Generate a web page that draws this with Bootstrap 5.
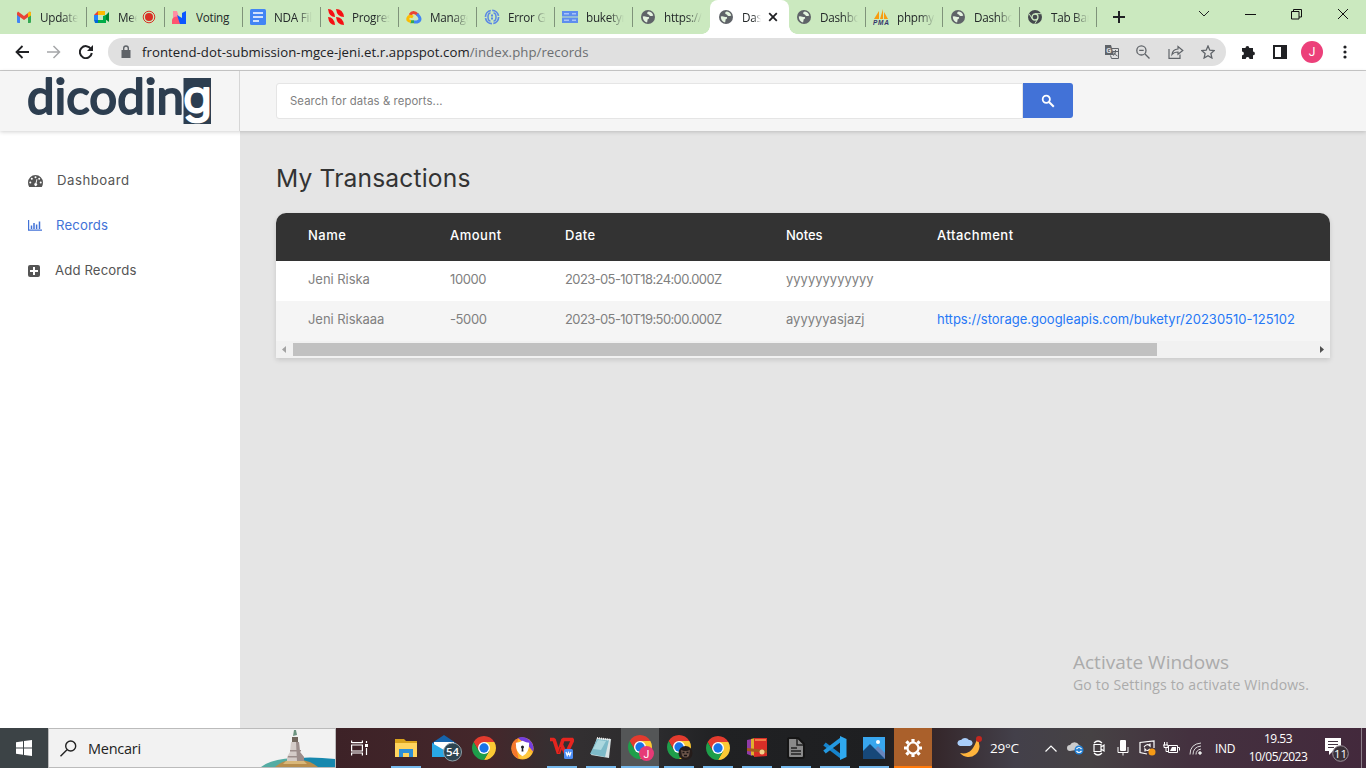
<!DOCTYPE html>
<html lang="id">
<head>
<meta charset="utf-8">
<meta name="viewport" content="width=device-width, initial-scale=1">
<title>Dashboard</title>
<link href="https://cdn.jsdelivr.net/npm/bootstrap@5.3.0/dist/css/bootstrap.min.css" rel="stylesheet">
<style>
body{height:768px;overflow:hidden;font-family:Inter,"Liberation Sans",sans-serif;font-size:13px;background:#e5e5e5}
svg{display:block;flex:none}
/* browser chrome */
.tabstrip{height:34px;background:#cbe9bf;padding-left:8px;font:11.7px "Open Sans",sans-serif;color:#24292a}
.btab{width:78px;height:34px;padding-left:8px;position:relative}
.btab.n77{width:77px}
.btab::after{content:"";width:1px;height:20px;background:#7f937a;position:absolute;right:-1px;top:7px}
.btab.nosep::after{display:none}
.btab .cap{margin-left:8px;width:38px;overflow:hidden;white-space:nowrap;letter-spacing:-.25px;-webkit-mask-image:linear-gradient(90deg,#000 60%,transparent)}
.btab .cap.full{-webkit-mask-image:none}
.btab.live{width:79px;background:#fff;border-radius:8px 8px 0 0}
.btab.live::before{content:"";position:absolute;left:-8px;right:-8px;bottom:0;height:8px;background:radial-gradient(circle at 0 0,transparent 7.5px,#fff 8px) left/8px 8px no-repeat,radial-gradient(circle at 100% 0,transparent 7.5px,#fff 8px) right/8px 8px no-repeat}
.toolbar{height:37px;background:#fff;border-bottom:1px solid #cbcbcb}
.omni{width:1118px;height:28px;border-radius:14px;background:#e0e0e0;font:13.2px "Open Sans",sans-serif;color:#202124;padding-left:12px;letter-spacing:.05px}
.avatar{width:22px;height:22px;background:#ec407a;color:#fff;font:12px Roboto,sans-serif}
/* app */
.app{height:657px}
.app-top{height:60px;background:#f5f5f5;box-shadow:0 1px 4px rgba(0,0,0,.18);position:relative;z-index:2}
.brand{width:240px;height:60px;border-right:1px solid #d6d6d6}
.find{width:797px;height:36px;margin-left:36px}
.find .form-control{border:1px solid #e5e5e5;border-radius:3px 0 0 3px;font-size:11.3px;padding:0 13px;letter-spacing:.1px;height:36px}
.find .form-control::placeholder{color:#808080;opacity:1}
.find .btn{width:50px;height:35px;border-radius:0 3px 3px 0;background:#4272d7;padding:0}
.side{width:240px;background:#fff;padding:27px 28px}
.side .nav-link{height:45px;padding:0;color:#555;font-size:13.2px;font-weight:400;letter-spacing:.12px}
.side .nav-link.active{color:#4272d7}
.main{padding:29px 36px}
.main h1{font-size:24.6px;font-weight:400;line-height:36px;color:#333;letter-spacing:.15px;margin-bottom:17px}
.sheet{width:1054px;height:145px;border-radius:10px 10px 0 0;overflow:hidden;background:#fff}
.sheet-wrap{box-shadow:0 2px 5px rgba(0,0,0,.13);border-radius:10px 10px 0 0}
.sheet table{table-layout:fixed;margin:0;border-collapse:collapse;width:1054px;white-space:nowrap}
.sheet th{height:48px;background:#333;color:#fff;font-weight:500;padding:0 0 3px;letter-spacing:.5px}
.sheet td{height:40px;color:#808080;padding:0 0 3px}
.sheet td:first-child{letter-spacing:-.05px}
.sheet td:nth-child(2){letter-spacing:-.4px}
.sheet td:nth-child(3){letter-spacing:-.61px}
.sheet th:nth-child(4){letter-spacing:0}
.sheet th:first-child,.sheet td:first-child{padding-left:32px}
.sheet tr:nth-child(2) td{background:#f5f5f5}
.sheet a{color:#2678f5;text-decoration:none}
.track{height:17px;background:#f1f1f1}
.thumb{width:864px;height:13px;background:#c1c1c1}
.watermark{position:absolute;left:1073px;top:650px;color:#ababab;font-family:"Open Sans",sans-serif;z-index:5}
/* taskbar */
.taskbar{height:40px;color:#fff;font:12px "Open Sans",sans-serif;background:linear-gradient(90deg,#3c4346 0,#3c4346 48px,#3d2227 336px,#44272b 490px,#343032 560px,#2b2b2d 660px,#202123 720px,#1e1f21 880px,#35272b 936px,#43404a 1015px,#464244 1090px,#44313f 1190px,#43293c 1366px)}
.taskbar>div{flex-shrink:0}
.tsearch{width:288px;height:40px;background:#f2f2f2;border:1px solid #bbb;color:#222;font-size:14.5px;position:relative;overflow:hidden}
.task{width:39px;height:40px;position:relative}
.task.open::after{content:"";position:absolute;left:5px;right:4px;bottom:0;height:2px;background:#76b9ed}
.task.focus{background:#545657}.task.focus::after{left:0;right:0}
.task.alert-app{background:#aa602b}.task.alert-app::after{left:0;right:0;background:#ff7a0c}
.tray{width:24px}
</style>
</head>
<body>
<svg width="0" height="0" class="position-absolute">
<symbol id="globe" viewBox="0 0 16 16"><circle cx="8" cy="8" r="8" fill="#5f6368"/><path fill="#e4f3df" d="M9 1.800q-2 .3-2 2 .3 1.400 2 1.200l1 1.500q1.500.8 4-.3Q13 2.600 9 1.800zM2 7.300q2.500-.3 4 .3 2 .8 3 .4 1 1.800-.6 2.400-1.400.3-1 2l-.5 1.800Q2.300 13 2 7.300z"/></symbol>
<symbol id="chrome" viewBox="2 2 44 44"><path fill="#e33b2e" d="M4.950 13A22 22 0 0 1 43.050 13H24L14.470 29.500Z"/><path fill="#fcc934" d="M43.050 13A22 22 0 0 1 24 46L33.530 29.500 24 13Z"/><path fill="#1e9e4a" d="M24 46A22 22 0 0 1 4.950 13L14.470 29.500H33.530Z"/><circle cx="24" cy="24" r="11" fill="#fff"/><circle cx="24" cy="24" r="8.500" fill="#1a73e8"/></symbol>
</svg>
<div class="d-flex flex-column">
<header>
<div class="tabstrip d-flex">
  <div class="btab d-flex align-items-center"><svg width="16" height="16" viewBox="0 0 16 16"><path fill="#4285f4" d="M1 4h3v10H2a1 1 0 0 1-1-1z"/><path fill="#34a853" d="M12 6h3v7a1 1 0 0 1-1 1h-2z"/><path fill="#ea4335" d="M1 4l1-1.400L8 7l6-4.400L15 4v2l-7 5-7-5z"/><path fill="#fbbc04" d="M12 4l2-1.400L15 4v2.500l-3 2z"/></svg><span class="cap">Updates</span></div>
  <div class="btab d-flex align-items-center"><svg width="16" height="16" viewBox="0 0 16 16"><path fill="#2684fc" d="M0 6h4v5H0z"/><path fill="#ea4335" d="M0 6l4-4v4z"/><path fill="#ffba00" d="M4 2h7v4H4z"/><path fill="#00832d" d="M11 7l4-4v10l-4-3z"/><path fill="#0066da" d="M0 11h4v3H1z"/><path fill="#00ac47" d="M4 11h5V7l3-1v8H4z"/></svg><span class="cap" style="width:19px">Meet</span><svg style="margin-left:5px" width="14" height="14" viewBox="0 0 14 14"><circle cx="7" cy="7" r="5.800" fill="none" stroke="#d93025"/><circle cx="7" cy="7" r="4" fill="#d93025"/></svg></div>
  <div class="btab d-flex align-items-center"><svg width="16" height="16" viewBox="0 0 16 16"><path fill="#ff8fa3" d="M1 2h4l2 6-6 4z"/><path fill="#ff5470" d="M0 12a4 4 0 0 1 7-3l2 6H0z"/><path fill="#0b57ff" d="M5 6l5 3V4l4-2v13H8z"/></svg><span class="cap full">Voting</span></div>
  <div class="btab d-flex align-items-center"><svg width="16" height="16"><rect width="16" height="16" rx="1.500" fill="#4285f4"/><path stroke="#fff" stroke-width="1.600" d="M3 4h10M3 8h10M3 12h6"/></svg><span class="cap">NDA File</span></div>
  <div class="btab d-flex align-items-center"><svg width="16" height="16" viewBox="0 0 16 16"><path fill="#f60f12" d="M0 0q6 0 7 8Q1 8 0 0zM8 0q7 0 8 8-7 0-8-8zM0 8q6 0 7 8-6 0-7-8zM8 8q7 0 8 8-7 0-8-8z"/></svg><span class="cap">Progress</span></div>
  <div class="btab d-flex align-items-center"><svg width="16" height="16" viewBox="0 0 16 16" fill="none" stroke-width="3"><path stroke="#ea4335" d="M4 6q3-5 8 0"/><path stroke="#4285f4" d="M11 5q3 3 3 5t-3 3H8"/><path stroke="#34a853" d="M8 12.700H4"/><path stroke="#fbbc04" d="M5 12.500Q1 12 2 9t5-1"/></svg><span class="cap">Manage</span></div>
  <div class="btab d-flex align-items-center"><svg width="16" height="16" viewBox="0 0 16 16" fill="none" stroke="#5b88e4"><circle cx="8" cy="8" r="6.600" stroke-width="1.700" stroke-dasharray="9 1.370"/><path stroke-width="1.500" d="M6.500 4Q4 4 4 8t2.500 4M9.500 4Q12 4 12 8t-2.500 4"/><path stroke-width="2" d="M8 5.500v2M8 8.500v2"/></svg><span class="cap">Error Gc</span></div>
  <div class="btab d-flex align-items-center"><svg width="16" height="16" viewBox="0 0 16 16"><path fill="#5d8dee" d="M0 2h16v5.500H0zM0 8.500h16V14H0z"/><path stroke="#a9c3f8" stroke-width="1.500" d="M2 4.700h5M10 4.700h4M2 11.300h5M10 11.300h4"/></svg><span class="cap">buketyr</span></div>
  <div class="btab nosep d-flex align-items-center"><svg width="16" height="14"><use href="#globe"/></svg><span class="cap">https://s</span></div>
  <div class="btab live nosep d-flex align-items-center"><svg width="16" height="14"><use href="#globe"/></svg><span class="cap" style="width:19px">Dash</span><svg style="margin-left:7px" width="10" height="10" viewBox="0 0 10 10"><path stroke="#202124" stroke-width="1.800" d="M1.200 1.200l7.600 7.600M8.800 1.200L1.200 8.800"/></svg></div>
  <div class="btab d-flex align-items-center" style="width:76px;padding-left:7px"><svg width="16" height="14"><use href="#globe"/></svg><span class="cap">Dashbo</span></div>
  <div class="btab n77 d-flex align-items-center"><svg width="16" height="16" viewBox="0 0 16 16"><path fill="#f89c0e" d="M1 10L6 2v8zM7 10L10 0v10zM11 10V3l4 7z"/><text x="0" y="16" font-size="6.500" font-weight="700" font-style="italic" fill="#33356b" font-family="Liberation Sans" textLength="16">PMA</text></svg><span class="cap">phpmya</span></div>
  <div class="btab n77 d-flex align-items-center"><svg width="16" height="14"><use href="#globe"/></svg><span class="cap">Dashbo</span></div>
  <div class="btab n77 d-flex align-items-center"><svg width="16" height="14" viewBox="0 0 16 14"><circle cx="8" cy="7" r="7" fill="#45494d"/><circle cx="8" cy="7" r="3" fill="#45494d" stroke="#cbe9bf" stroke-width="1.300"/><path stroke="#cbe9bf" d="M8 3.700h6M5.200 8.800l-3-5M10.800 8.800l-3 5"/></svg><span class="cap">Tab Bar</span></div>
  <div class="d-flex align-items-center" style="margin-left:17px"><svg width="12" height="12"><path stroke="#202124" stroke-width="2" d="M6 0v12M0 6h12"/></svg></div>
  <div class="d-flex align-items-center ms-auto" style="height:28px;gap:35px;padding-right:17px"><svg width="12" height="8"><path fill="none" stroke="#202124" d="M1 1l5 5 5-5"/></svg><svg width="11" height="11"><path stroke="#111" d="M0 5.500h11"/></svg><svg width="11" height="11"><path fill="none" stroke="#111" d="M.5 2.500h7.500v7.500H.5zM2.500 2.500v-2h8v7.500h-2.500"/></svg><svg width="12" height="12"><path stroke="#111" d="M1 1l10 10M11 1L1 11"/></svg></div>
</div>
<div class="toolbar d-flex align-items-center">
  <div class="d-flex align-items-center" style="width:108px;padding-left:15px;gap:18px"><svg width="14" height="14" viewBox="0 0 14 14"><path fill="none" stroke="#202124" stroke-width="1.800" d="M14 7H1.500M7.500 1l-6 6 6 6"/></svg><svg width="14" height="14" viewBox="0 0 14 14"><path fill="none" stroke="#a5a7a9" stroke-width="1.500" d="M0 7h12.500M6.500 1l6 6-6 6"/></svg><svg width="14" height="14" viewBox="0 0 14 14"><path fill="none" stroke="#202124" stroke-width="2" d="M12 4A6 6 0 1 0 12.800 8"/><path fill="#202124" d="M14 0v6H8z"/></svg></div>
  <div class="omni d-flex align-items-center"><svg width="12" height="14" viewBox="0 0 12 14"><path fill="#5f6368" d="M1.500 5h9v8h-9z"/><path fill="none" stroke="#5f6368" stroke-width="1.400" d="M3.700 5V3.300a2.300 2.300 0 0 1 4.600 0V5"/></svg><span style="margin-left:10px">frontend-dot-submission-mgce-jeni.et.r.appspot.com<span style="color:#6b6e71">/index.php/records</span></span>
    <div class="d-flex align-items-center ms-auto" style="gap:17.5px;padding-right:11px"><svg width="14" height="14" viewBox="0 0 14 14"><path fill="#5f6368" d="M0 0h6l3 10H0z"/><path fill="none" stroke="#5f6368" d="M7 3.500h6.500v10H6.500l-1-3M8 6.500h5M10.500 5v1.500q0 3-2.500 4M9 7.500q1 2.500 3.500 3.500"/><text x="1.200" y="7.700" font-size="7.500" font-weight="700" font-family="Roboto" fill="#e0e0e0">G</text></svg><svg width="14" height="14" viewBox="0 0 14 14"><path fill="none" stroke="#5f6368" stroke-width="1.400" d="M9 9l4.500 4.500M3.200 5.400h4.500"/><circle cx="5.400" cy="5.400" r="4.600" fill="none" stroke="#5f6368" stroke-width="1.300"/></svg><svg width="16" height="14" viewBox="0 0 16 14"><path fill="none" stroke="#5f6368" stroke-width="1.200" d="M1 4v9.300h11V9.500M4 9.500q.5-5 6-5.500V1.500L14.800 5.500 10 9.300V7Q6 7 4 9.500z"/></svg><svg width="14" height="14" viewBox="0 0 14 14"><path fill="none" stroke="#5f6368" stroke-width="1.300" d="M7 1l1.800 4.200 4.500.4-3.400 3 1 4.400L7 10.700 3.100 13l1-4.400-3.400-3 4.500-.4z"/></svg></div></div>
  <div class="d-flex align-items-center" style="margin-left:15px"><svg width="14" height="15" viewBox="0 0 14 15"><path fill="#202124" d="M1 3h3.500a1.900 1.900 0 0 1 3.800 0H12v3.500a1.900 1.900 0 0 1 0 3.800V14H8.500a1.900 1.900 0 0 0-3.800 0H1v-3.700a1.900 1.900 0 0 0 0-3.800z"/></svg><svg style="margin-left:18px" width="14" height="14"><path fill="none" stroke="#202124" stroke-width="2" d="M1 1h12v12H1z"/><path fill="#202124" d="M8 1h5v12H8z"/></svg><div class="avatar rounded-circle d-flex align-items-center justify-content-center" style="margin-left:14px">J</div><svg style="margin-left:20px" width="4" height="14" fill="#202124"><circle cx="2" cy="2" r="1.600"/><circle cx="2" cy="7" r="1.600"/><circle cx="2" cy="12" r="1.600"/></svg></div>
</div>
</header>
<div class="app d-flex flex-column">
  <div class="app-top d-flex align-items-center">
    <div class="brand"><svg width="239" height="60" viewBox="0 0 239 60"><rect x="183.500" y="7" width="27.500" height="46" fill="#2d3e50"/><g stroke-linejoin="round" stroke-linecap="round"><text font-family="Lato" font-size="48" x="27" y="42.500" textLength="157" lengthAdjust="spacingAndGlyphs" fill="#2d3e50" stroke="#2d3e50" stroke-width="1.900">dicodin</text><text font-family="Inter" font-size="45" x="183" y="42.300" textLength="29" fill="#fff" stroke="#fff" stroke-width="1.800" lengthAdjust="spacingAndGlyphs">g</text></g></svg></div>
    <form class="find d-flex"><input class="form-control shadow-none" placeholder="Search for datas &amp; reports..."><button type="button" class="btn flex-shrink-0 d-flex align-items-center justify-content-center"><svg width="14" height="14" viewBox="0 0 14 14"><circle cx="5.300" cy="5.300" r="3.600" fill="none" stroke="#fff" stroke-width="1.800"/><path stroke="#fff" stroke-width="2" d="M8 8l4.800 4.800"/></svg></button></form>
  </div>
  <div class="d-flex flex-grow-1">
    <nav class="side nav flex-column flex-nowrap">
      <a class="nav-link d-flex align-items-center" href="#"><svg width="15" height="12" viewBox="0 0 15 12"><path fill="#555" d="M7.500 0A7.500 7.500 0 0 0 0 7.500Q0 10 1.200 12h12.600Q15 10 15 7.500A7.500 7.500 0 0 0 7.500 0z"/><g fill="#fff"><circle cx="2.300" cy="7.500" r="1"/><circle cx="3.800" cy="3.800" r="1"/><circle cx="7.500" cy="2.200" r="1"/><circle cx="11.200" cy="3.800" r="1"/><circle cx="12.700" cy="7.500" r="1"/><path d="M8.600 4l.8.200-.9 4a1.500 1.500 0 1 1-1-.2z"/></g></svg><span style="margin-left:14px;letter-spacing:.5px">Dashboard</span></a>
      <a class="nav-link active d-flex align-items-center" href="#"><svg width="14" height="11" viewBox="0 0 14 11"><path fill="none" stroke="#4272d7" stroke-width="1.200" d="M.6 0v10.200H14"/><path stroke="#4272d7" stroke-width="1.500" d="M3.500 9V5.500M6 9V3M8.600 9V4.500M11.500 9V1.500"/></svg><span style="margin-left:14px">Records</span></a>
      <a class="nav-link d-flex align-items-center" href="#"><svg width="12" height="12"><rect width="12" height="12" rx="2" fill="#555"/><path stroke="#fff" stroke-width="2" d="M6 2v8M2 6h8"/></svg><span style="margin-left:15px">Add Records</span></a>
    </nav>
    <main class="main flex-grow-1">
      <h1>My Transactions</h1>
      <div class="sheet-wrap"><div class="sheet">
        <table><colgroup><col style="width:174px"><col style="width:115px"><col style="width:221px"><col style="width:151px"><col></colgroup>
          <thead><tr><th>Name</th><th>Amount</th><th>Date</th><th>Notes</th><th>Attachment</th></tr></thead>
          <tbody><tr><td>Jeni Riska</td><td>10000</td><td>2023-05-10T18:24:00.000Z</td><td>yyyyyyyyyyyy</td><td></td></tr>
          <tr><td>Jeni Riskaaa</td><td>-5000</td><td>2023-05-10T19:50:00.000Z</td><td>ayyyyyasjazj</td><td><a href="#">https://storage.googleapis.com/buketyr/20230510-125102</a></td></tr></tbody></table>
        <div class="track d-flex align-items-center"><svg width="17" height="17"><path fill="#a3a3a3" d="M10 5v7L6 8.500z"/></svg><div class="thumb"></div><svg class="ms-auto" width="17" height="17"><path fill="#505050" d="M7 5v7l4-3.500z"/></svg></div>
      </div></div>
    </main>
  </div>
</div>
<div class="watermark"><div style="font-size:19px;line-height:24px">Activate Windows</div><div style="font-size:14px;line-height:21px;letter-spacing:.19px">Go to Settings to activate Windows.</div></div>
<footer class="taskbar d-flex">
  <div class="d-flex align-items-center justify-content-center" style="width:48px"><svg width="16" height="16"><path fill="#fff" d="M0 2.300l7-1v6.200H0zM8 1.100L16 0v7.500H8zM0 8.500h7v6.200l-7-1zM8 8.500h8V16l-8-1.100z"/></svg></div>
  <div class="tsearch d-flex align-items-center"><svg style="margin-left:11px" width="17" height="17" viewBox="0 0 17 17"><circle cx="10.700" cy="6" r="5" fill="none" stroke="#222" stroke-width="1.400"/><path stroke="#222" stroke-width="1.400" d="M7 9.700L.5 16.200"/></svg><span style="margin-left:11px;letter-spacing:-.25px">Mencari</span>
    <svg class="position-absolute end-0 bottom-0" width="76" height="38" viewBox="0 0 76 38"><path fill="#1788ae" d="M28 30q22-3 48 0v8H28z"/><path fill="#53aca3" d="M2 38q10-8 32-9v9z"/><path fill="#b78d4d" d="M16 38q8-7 20-8 15 1 23 8z"/><path fill="#d9b779" d="M27 32h18l3 3H24z"/><path fill="#d4cbc8" d="M32 13h8l1 10 4 5v4H28v-4l3-5z"/><path fill="#9c8d8b" d="M37 13h3l1 10 4 5v4h-7zM31 21h11v1.500H31zM29 27h15v1.500H29z"/><path fill="#72665d" d="M33 8h6v5h-6z"/><path fill="#6d9480" d="M35 1h2l1 5-4 1z"/></svg></div>
  <div class="d-flex align-items-center justify-content-center" style="width:50px;padding-right:3px"><svg width="17" height="16" viewBox="0 0 17 16"><path fill="none" stroke="#fff" stroke-width="1.200" d="M.6 3V.6M.6 2.600h10.800M11.400 3V.6M.6 5h10.800v6H.6zM.6 15.500V13h10.800v2.500M15.500 1v2M15.500 8v7"/><path fill="#fff" d="M14 4h3v3h-3z"/></svg></div>
  <div class="task open d-flex align-items-center justify-content-center"><svg width="22" height="20"><path fill="#d9a21b" d="M0 1h9l2 2h11v5H0z"/><path fill="#ffd45e" d="M0 5h22v14H0z"/><path fill="#2d8fd7" d="M4 11h14v8h-4v-4H8v4H4z"/></svg></div>
  <div class="task d-flex align-items-center justify-content-center"><svg width="32" height="28" viewBox="0 0 32 28" style="margin-left:5px"><path fill="#1564ac" d="M1 9L13 1l12 8v13H1z"/><path fill="#fff" d="M3 8h20v9H3z"/><path fill="#29a8e6" d="M1 9l12 7 12-7v14H1z"/><circle cx="21.500" cy="18" r="9" fill="#2e4652" stroke="#8da0a8"/><text x="21.500" y="22.300" text-anchor="middle" font-size="11.500" fill="#fff" font-weight="600" font-family="Open Sans">54</text></svg></div>
  <div class="task d-flex align-items-center justify-content-center"><svg width="24" height="24"><use href="#chrome"/></svg></div>
  <div class="task d-flex align-items-center justify-content-center"><svg width="23" height="23" viewBox="0 0 24 24"><circle cx="12" cy="12" r="11.500" fill="#ffb52c"/><path fill="#743ee0" d="M7 1a12 12 0 0 1 16 14L18 9z"/><path fill="#f4772e" d="M8 1Q0 4 .5 12T8 23L5 10z"/><path fill="#ffc83e" d="M8 22q9 3 14-5l-5-3z"/><path fill="#fff" d="M12 4q4 2 7 2 0 11-7 14Q5 17 5 6q3 0 7-2z"/><circle cx="12" cy="10.500" r="1.600" fill="#25232a"/><path fill="#25232a" d="M11.400 11h1.200l.4 4h-2z"/></svg></div>
  <div class="task open d-flex align-items-center justify-content-center"><svg width="25" height="24" viewBox="0 0 25 24"><path fill="none" stroke="#e5251f" stroke-width="3.600" stroke-linejoin="bevel" d="M1 3.500h4l4.500 14L14 3.500h10L17 18l-4.500-9"/><path fill="none" stroke="#a11b17" d="M11.500 11l-2 6"/><rect x="15" y="13" width="9" height="10" rx="1.500" fill="#4d8df5"/><path fill="none" stroke="#fff" stroke-width="1.200" d="M17 16l1.200 3.500 1.300-3 1.300 3L22 16"/></svg></div>
  <div class="task open d-flex align-items-center justify-content-center"><svg width="24" height="24"><path fill="#d9e3e4" d="M8 2l14 1-2 19-18-3z"/><path fill="#7dbac8" d="M8 3l12 1-4 17-15-3z"/><path fill="#acd8df" d="M9 4l8 1-5 9-8-1z"/><path stroke="#eee" stroke-dasharray="1 1" stroke-width="2" d="M8 2l14 2"/></svg></div>
  <div class="task open focus d-flex align-items-center justify-content-center" style="width:38px;margin-left:1px"><svg width="28" height="26" style="margin-left:4px"><use href="#chrome" width="24" height="24"/><circle cx="18.500" cy="18.500" r="7.500" fill="#e63a76"/><text x="18.500" y="22.500" fill="#fff" font-size="10.500" text-anchor="middle" font-family="Roboto">J</text></svg></div>
  <div class="task open d-flex align-items-center justify-content-center"><svg width="28" height="26" style="margin-left:4px"><use href="#chrome" width="24" height="24"/><circle cx="18.500" cy="18" r="7" fill="#251c1a"/><path fill="#6c554a" d="M14 15l3 1h3l3-1-1 6q-3 3-7 0z"/><path stroke="#171313" stroke-width="1.500" d="M15.500 17.500h2M19.500 17.500h2M17 20.500h3"/></svg></div>
  <div class="task open d-flex align-items-center justify-content-center"><svg width="24" height="24"><use href="#chrome"/></svg></div>
  <div class="task open d-flex align-items-center justify-content-center"><svg width="22" height="22"><path fill="#913ba8" d="M1 3l5-1v17l-5-2z"/><path fill="#e0af2e" d="M5 2l4-1v18l-4-1z"/><path fill="#d92e27" d="M8 1h13v18l-13 1z"/><path fill="#f27a45" d="M9 2h11v2H9z"/><path fill="#a65a1d" d="M1 11l20 2v3L1 14z"/><circle cx="16" cy="15" r="2.500" fill="#f2d28b"/></svg></div>
  <div class="task open d-flex align-items-center justify-content-center"><svg width="18" height="22"><path fill="#8a8a8a" stroke="#151515" stroke-width="2" d="M2 1h9l6 6v12q0 2-2 2H3q-2 0-2-2V2z"/><path fill="none" stroke="#222" stroke-width="1.500" d="M4 11h6M4 14h10M4 17h10M10 2v6h6"/></svg></div>
  <div class="task open d-flex align-items-center justify-content-center"><svg width="24" height="24"><path fill="none" stroke="#1684cd" stroke-width="4" d="M1.500 8L18 20.500"/><path fill="none" stroke="#2499e0" stroke-width="4" d="M1.500 16L18 3.500"/><path fill="#2fa9ef" d="M17 0l6.500 3v18L17 24z"/></svg></div>
  <div class="task open d-flex align-items-center justify-content-center"><svg width="22" height="22"><path fill="#38a6ee" d="M0 0h22v22H0z"/><path fill="#6785bd" d="M9 15l6-6 7 7v6H9z"/><path fill="#174879" d="M0 14l7-7 15 15H0z"/><circle cx="15" cy="5" r="2" fill="#fff"/></svg></div>
  <div class="task open alert-app d-flex align-items-center justify-content-center" style="width:38px;margin-left:1px"><svg width="18" height="18" viewBox="0 0 18 18"><circle cx="9" cy="9" r="5.500" fill="none" stroke="#fff" stroke-width="2.200"/><path stroke="#fff" stroke-width="3.200" d="M9 0v3M9 15v3M0 9h3M15 9h3M2.400 2.400l2 2M13.600 13.600l2 2M2.400 15.600l2-2M13.600 4.400l2-2"/></svg></div>
  <div class="d-flex align-items-center" style="margin-left:25px;width:82px"><svg width="26" height="24"><path fill="#ffb43c" d="M20 3a11 11 0 1 1-17 14q12 3 17-14z"/><path fill="#a9cdf9" d="M3 10a3 3 0 0 1 1-6 5 5 0 0 1 8 0 3 3 0 0 1 1 6z"/><circle cx="22" cy="3" r="3" fill="#c4271f"/></svg><span style="margin-left:7px;font-size:13.500px;letter-spacing:-.2px">29°C</span></div>
  <div class="tray d-flex align-items-center justify-content-center"><svg width="12" height="7"><path fill="none" stroke="#fff" stroke-width="1.200" d="M.5 6.500L6 1l5.500 5.500"/></svg></div>
  <div class="tray d-flex align-items-center justify-content-center"><svg width="17" height="14"><path fill="#ccc" d="M3 10a3 3 0 0 1 0-6 5 5 0 0 1 9 0q3 1 3 4z"/><circle cx="12" cy="9" r="4.500" fill="#2380d4"/><path fill="none" stroke="#fff" stroke-width="1.200" d="M9.500 8q2.500-3 5 0M14.500 10q-2.500 3-5 0"/></svg></div>
  <div class="tray d-flex align-items-center justify-content-center"><svg width="12" height="16"><path fill="none" stroke="#fff" stroke-width="1.200" d="M1 3q4-4 8 0M1 13q4 4 8 0M1 4.500h7v7H1zM8 7l3-2v6L8 9"/></svg></div>
  <div class="tray d-flex align-items-center justify-content-center"><svg width="12" height="16"><rect x="3" width="6" height="11" rx="1" fill="#fff"/><path fill="none" stroke="#fff" d="M1 7v5.500h10V7M6 12v3.500"/></svg></div>
  <div class="tray d-flex align-items-center justify-content-center"><svg width="17" height="16"><path fill="none" stroke="#fff" stroke-width="1.200" d="M15 8V1L1 2.500v10l7 1.500M5 7q3-4 6-1V3.500M11 9q-3 3-5 0v2.500"/><circle cx="13" cy="12" r="3.500" fill="#f59a16"/></svg></div>
  <div class="tray d-flex align-items-center justify-content-center"><svg width="17" height="12"><path fill="none" stroke="#fff" d="M5.500 3.500h9v7h-9zM15 5.500h1.500v3M0 3h5v2.500H1V3M1.500 0v3M4 0v3M3 5v4.500h2"/><path fill="#fff" d="M9 5h4v4H7z"/></svg></div>
  <div class="tray d-flex align-items-center justify-content-center"><svg width="13" height="13" fill="none" stroke="#ddd"><path d="M1 12.500Q1 2 12 1M4 12.500Q4 5 12 4M7 12.500Q7 8 12 7"/><circle cx="11" cy="11" r="1.300" fill="#fff"/></svg></div>
  <div class="d-flex align-items-center justify-content-center" style="width:34px;letter-spacing:-.3px;padding-left:2px">IND</div>
  <div class="d-flex flex-column align-items-center" style="width:72px;line-height:18px;padding:2px 0 0 2px;letter-spacing:-.5px"><span>19.53</span><span>10/05/2023</span></div>
  <div class="d-flex align-items-center" style="width:48px;padding:4px 0 0 12px"><svg width="26" height="24" viewBox="0 0 26 24"><path fill="#fff" d="M0 0h16v13H8l-4 4v-4H0z"/><path stroke="#443542" stroke-width="1.200" d="M3 3.500h10M3 6.500h10M3 9.500h6"/><circle cx="15.500" cy="15.500" r="7.800" fill="#3b3138" stroke="#9c929b"/><text x="15.500" y="20" text-anchor="middle" fill="#fff" font-size="11.500" font-family="Open Sans">11</text></svg></div>
  <div style="width:1px;background:#8b7f89"></div>
</footer>
</div>
<script src="https://cdn.jsdelivr.net/npm/bootstrap@5.3.0/dist/js/bootstrap.bundle.min.js"></script>
</body>
</html>
